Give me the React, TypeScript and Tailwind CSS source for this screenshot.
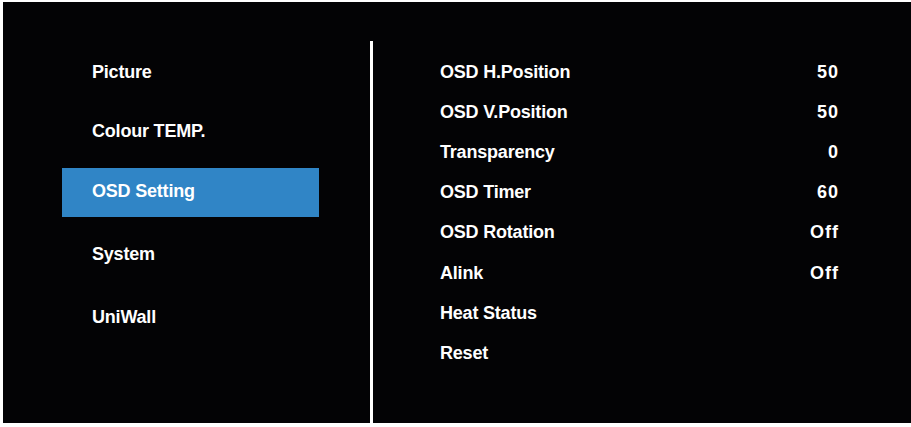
const menu = ["Picture", "Colour TEMP.", "OSD Setting", "System", "UniWall"];

const settings: { label: string; value?: string }[] = [
  { label: "OSD H.Position", value: "50" },
  { label: "OSD V.Position", value: "50" },
  { label: "Transparency", value: "0" },
  { label: "OSD Timer", value: "60" },
  { label: "OSD Rotation", value: "Off" },
  { label: "Alink", value: "Off" },
  { label: "Heat Status" },
  { label: "Reset" },
];

export default function App() {
  return (
    <div
      className="w-[911px] h-[427px] bg-white pt-[2px] pl-[3px] pb-[4px] text-white"
      style={{ fontFamily: '"Liberation Sans", Arial, sans-serif' }}
    >
      <div className="flex h-full bg-[#030305]">
        {/* left menu */}
        <div className="w-[367px] pt-[50px] flex flex-col text-[18px] font-bold tracking-[-0.2px]">
          <div className="ml-[59px] w-[257px] h-[40px] pl-[30px] flex items-center">{menu[0]}</div>
          <div className="ml-[59px] w-[257px] h-[40px] pl-[30px] mt-[19px] flex items-center">{menu[1]}</div>
          <div className="ml-[59px] w-[257px] h-[49px] pl-[30px] mt-[17px] pb-[2px] flex items-center bg-[#3085c6]">
            {menu[2]}
          </div>
          <div className="ml-[59px] w-[257px] h-[40px] pl-[30px] mt-[17px] flex items-center">{menu[3]}</div>
          <div className="ml-[59px] w-[257px] h-[40px] pl-[30px] mt-[23px] flex items-center">{menu[4]}</div>
        </div>

        <div className="w-[3px] mt-[39px] bg-white" />

        {/* settings list */}
        <div className="pl-[67px] pt-[50px] w-[466px] flex flex-col text-[18px] font-bold">
          {settings.map((s) => (
            <div key={s.label} className="h-[40.2px] flex items-center justify-between">
              <span className="tracking-[-0.2px]">{s.label}</span>
              {s.value && <span className="tracking-[1px]">{s.value}</span>}
            </div>
          ))}
        </div>
      </div>
    </div>
  );
}
